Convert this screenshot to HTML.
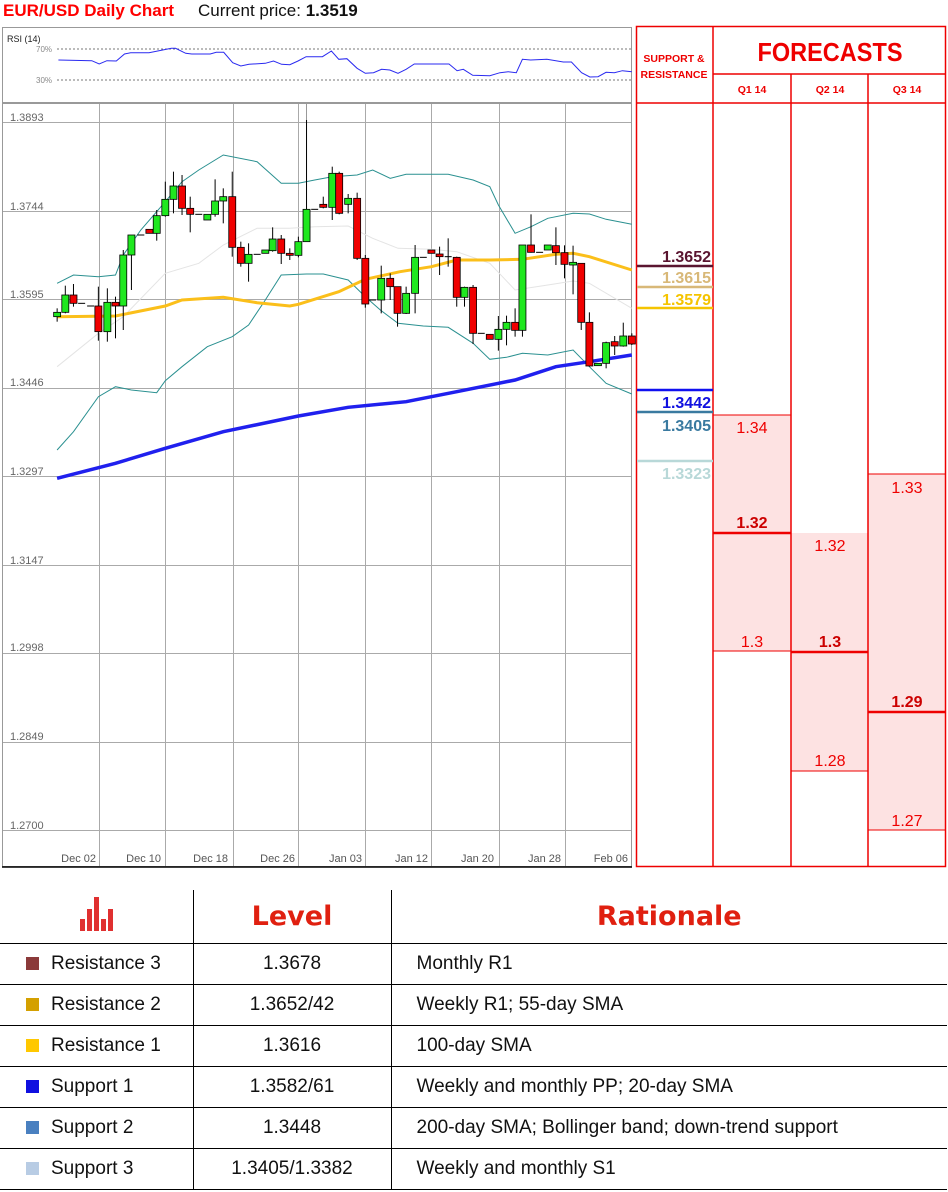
<!DOCTYPE html>
<html><head><meta charset="utf-8">
<style>
*{margin:0;padding:0;box-sizing:border-box}
body{width:948px;height:1192px;background:#fff;font-family:"Liberation Sans",sans-serif;position:relative;overflow:hidden}
.abs{position:absolute}
svg text{font-family:"Liberation Sans",sans-serif}
table{position:absolute;left:0;top:890px;width:947px;border-collapse:collapse}
td{height:41px;font-size:19px;color:#111;border-bottom:1.5px solid #000}
td.c2{text-align:center;border-left:1.5px solid #000;border-right:1.5px solid #000}
td.c1{padding-left:26px}
td.c3{padding-left:25px}
.sq{display:inline-block;width:13px;height:13px;margin-right:12px;vertical-align:-1px}
th{height:53px;border-bottom:1.5px solid #000;color:#e02010;font-size:27px;font-family:"DejaVu Sans","Liberation Sans",sans-serif;font-weight:900}
</style></head><body>
<div class="abs" style="left:3px;top:0;font-size:17px;font-weight:bold;color:#f00;line-height:22px">EUR/USD Daily Chart</div>
<div class="abs" style="left:198px;top:0;font-size:17px;color:#111;line-height:22px">Current price: <b>1.3519</b></div>

<svg class="abs" style="left:0;top:0" width="948" height="880" id="ch">
<rect x="2.5" y="27.5" width="629" height="75" fill="#fff" stroke="#999"/>
<text x="7" y="42" font-size="9" fill="#222">RSI (14)</text>
<text x="36" y="52" font-size="8" fill="#888">70%</text>
<text x="36" y="83" font-size="8" fill="#888">30%</text>
<line x1="57" y1="49" x2="631" y2="49" stroke="#777" stroke-dasharray="2,2"/>
<line x1="57" y1="80" x2="631" y2="80" stroke="#777" stroke-dasharray="2,2"/>
<rect x="2.5" y="103.5" width="629" height="763" fill="#fff" stroke="#999"/>
<g id="grid" stroke="#999" stroke-width="1"></g>
<g font-size="11" fill="#666">
<text x="10" y="121">1.3893</text><text x="10" y="210">1.3744</text><text x="10" y="298">1.3595</text>
<text x="10" y="386">1.3446</text><text x="10" y="475">1.3297</text><text x="10" y="564">1.3147</text>
<text x="10" y="651">1.2998</text><text x="10" y="740">1.2849</text><text x="10" y="829">1.2700</text>
</g>
<g font-size="11" fill="#555" text-anchor="end">
<text x="96" y="862">Dec 02</text><text x="161" y="862">Dec 10</text><text x="228" y="862">Dec 18</text>
<text x="295" y="862">Dec 26</text><text x="362" y="862">Jan 03</text><text x="428" y="862">Jan 12</text>
<text x="494" y="862">Jan 20</text><text x="561" y="862">Jan 28</text><text x="628" y="862">Feb 06</text>
</g>
<line x1="2" y1="867" x2="632" y2="867" stroke="#000" stroke-width="1.5"/>
<g id="lines" fill="none"></g>
<g id="candles"></g>
</svg>

<!-- right panel -->
<svg class="abs" style="left:630px;top:20px" width="318" height="860">
<rect x="83" y="395" width="78" height="236" fill="#fde2e2"/>
<rect x="161" y="513" width="77" height="238" fill="#fde2e2"/>
<rect x="238" y="454" width="78" height="356" fill="#fde2e2"/>
<g stroke="#e00" stroke-width="1.5" fill="none">
<rect x="6.5" y="6.5" width="309" height="840"/>
<line x1="83" y1="6" x2="83" y2="847"/>
<line x1="83" y1="54" x2="316" y2="54"/>
<line x1="6" y1="83" x2="316" y2="83"/>
<line x1="161" y1="54" x2="161" y2="847"/>
<line x1="238" y1="54" x2="238" y2="847"/>
<line x1="83" y1="395" x2="161" y2="395" stroke-width="1"/>
<line x1="83" y1="631" x2="161" y2="631" stroke-width="1"/>
<line x1="161" y1="751" x2="238" y2="751" stroke-width="1"/>
<line x1="238" y1="454" x2="316" y2="454" stroke-width="1"/>
<line x1="238" y1="810" x2="316" y2="810" stroke-width="1"/>
<line x1="83" y1="513" x2="161" y2="513" stroke-width="2.5"/>
<line x1="161" y1="632" x2="238" y2="632" stroke-width="2.5"/>
<line x1="238" y1="692" x2="316" y2="692" stroke-width="2.5"/>
</g>
<g font-weight="bold" fill="#e00" font-size="10.5" text-anchor="middle" font-family="Liberation Sans,sans-serif">
<text x="44" y="42">SUPPORT &amp;</text><text x="44" y="58">RESISTANCE</text>
<text x="122" y="73">Q1 14</text><text x="200" y="73">Q2 14</text><text x="277" y="73">Q3 14</text>
</g>
<text x="200" y="41" font-size="26" font-weight="bold" fill="#e00" text-anchor="middle" textLength="145" lengthAdjust="spacingAndGlyphs">FORECASTS</text>
<g font-size="16" text-anchor="middle" fill="#e00">
<text x="122" y="413">1.34</text><text x="122" y="508" font-weight="bold" fill="#c00">1.32</text><text x="122" y="627">1.3</text>
<text x="200" y="531">1.32</text><text x="200" y="627" font-weight="bold" fill="#c00">1.3</text><text x="200" y="746">1.28</text>
<text x="277" y="473">1.33</text><text x="277" y="687" font-weight="bold" fill="#c00">1.29</text><text x="277" y="806">1.27</text>
</g>
<g stroke-width="2.5">
<line x1="7" y1="246" x2="83" y2="246" stroke="#5a1530"/>
<line x1="7" y1="267" x2="83" y2="267" stroke="#d8b878"/>
<line x1="7" y1="288" x2="83" y2="288" stroke="#f5c400"/>
<line x1="7" y1="370" x2="83" y2="370" stroke="#1010f0"/>
<line x1="7" y1="392" x2="83" y2="392" stroke="#3a7aa0"/>
<line x1="7" y1="441" x2="83" y2="441" stroke="#b8d8d8"/>
</g>
<g font-size="16" font-weight="bold" text-anchor="end">
<text x="81" y="242" fill="#5a1530">1.3652</text>
<text x="81" y="263" fill="#d8b878">1.3615</text>
<text x="81" y="285" fill="#f5c400">1.3579</text>
<text x="81" y="388" fill="#1010e0">1.3442</text>
<text x="81" y="411" fill="#3a7aa0">1.3405</text>
<text x="81" y="459" fill="#b8d8d8">1.3323</text>
</g>
</svg>

<table>
<tr><th style="width:193px"><svg width="36" height="36" viewBox="0 0 36 36"><g fill="#e03030"><rect x="2" y="24" width="5" height="12"/><rect x="9" y="14" width="5" height="22"/><rect x="16" y="2" width="5" height="34"/><rect x="23" y="24" width="5" height="12"/><rect x="30" y="14" width="5" height="22"/></g></svg></th>
<th style="width:198px;border-left:1.5px solid #000;border-right:1.5px solid #000">Level</th><th>Rationale</th></tr>
<tr><td class="c1"><span class="sq" style="background:#8b3a3a"></span>Resistance 3</td><td class="c2">1.3678</td><td class="c3">Monthly R1</td></tr>
<tr><td class="c1"><span class="sq" style="background:#d4a000"></span>Resistance 2</td><td class="c2">1.3652/42</td><td class="c3">Weekly R1; 55-day SMA</td></tr>
<tr><td class="c1"><span class="sq" style="background:#ffc800"></span>Resistance 1</td><td class="c2">1.3616</td><td class="c3">100-day SMA</td></tr>
<tr><td class="c1"><span class="sq" style="background:#1010e0"></span>Support 1</td><td class="c2">1.3582/61</td><td class="c3">Weekly and monthly PP; 20-day SMA</td></tr>
<tr><td class="c1"><span class="sq" style="background:#4a80c0"></span>Support 2</td><td class="c2">1.3448</td><td class="c3">200-day SMA; Bollinger band; down-trend support</td></tr>
<tr><td class="c1"><span class="sq" style="background:#b8cce4"></span>Support 3</td><td class="c2">1.3405/1.3382</td><td class="c3">Weekly and monthly S1</td></tr>
</table>

<script>
var NS="http://www.w3.org/2000/svg";
function el(p,t,a){var e=document.createElementNS(NS,t);for(var k in a)e.setAttribute(k,a[k]);p.appendChild(e);return e;}
var g=document.getElementById('grid');
[122,211,299,388,476,565,653,742,830].forEach(function(y){el(g,'line',{x1:3,y1:y+.5,x2:631,y2:y+.5,stroke:'#aaa'});});
[99,165,233,298,365,431,499,565].forEach(function(x){el(g,'line',{x1:x+.5,y1:104,x2:x+.5,y2:866,stroke:'#aaa'});});
el(g,'line',{x1:306.5,y1:104,x2:306.5,y2:210,stroke:'#999'});
function X(v){return v/2.45}function Y(v){return 120+v/3}
function pl(pts,st,w,rsi){var d=pts.map(function(p,i){return (i?'L':'M')+X(p[0]).toFixed(1)+','+(rsi?(p[1]/3):Y(p[1])).toFixed(1)}).join('');el(document.getElementById('lines'),'path',{d:d,stroke:st,'stroke-width':w,fill:'none'});}
pl([[140,740],[241,640],[302,590],[405,460],[487,430],[547,375],[630,325],[710,325],[771,320],[853,318],[913,355],[975,385],[1057,388],[1119,395],[1200,430],[1262,510],[1342,495],[1404,483],[1444,490],[1548,565]],'#e4e4e4',1);
pl([[140,490],[180,465],[241,470],[283,465],[302,405],[345,330],[405,245],[446,185],[487,150],[547,105],[630,125],[689,190],[731,190],[771,180],[814,170],[875,165],[913,150],[956,175],[995,163],[1098,163],[1159,180],[1200,200],[1221,255],[1262,340],[1301,320],[1342,295],[1404,280],[1444,282],[1485,298],[1548,313]],'#2a9090',1);
pl([[140,990],[180,935],[241,830],[283,800],[322,810],[384,818],[405,782],[446,740],[508,680],[569,650],[609,615],[650,540],[689,465],[751,462],[792,462],[853,480],[895,530],[934,572],[975,610],[1037,618],[1098,622],[1159,670],[1200,718],[1241,712],[1280,700],[1342,705],[1404,690],[1444,740],[1485,790],[1548,822]],'#2a9090',1);
pl([[140,590],[283,588],[405,558],[446,540],[547,532],[630,548],[710,558],[731,553],[830,515],[895,478],[980,455],[1057,440],[1119,420],[1200,420],[1280,418],[1362,403],[1404,400],[1444,410],[1548,450]],'#fbbf1a',3);
pl([[140,1075],[283,1030],[405,985],[547,935],[731,888],[853,862],[995,845],[1119,815],[1262,780],[1362,740],[1444,725],[1548,705]],'#2020ee',3.5);
pl([[143,180],[225,182],[243,192],[262,182],[285,183],[305,162],[320,158],[365,158],[420,145],[430,145],[455,160],[470,162],[515,162],[530,157],[548,157],[570,188],[590,198],[610,193],[650,190],[670,183],[690,193],[710,194],[730,183],[750,170],[790,170],[812,153],[830,178],[850,176],[875,205],[895,220],[915,218],[935,208],[955,210],[975,220],[995,208],[1015,192],[1100,192],[1120,212],[1135,208],[1158,226],[1200,227],[1225,218],[1245,215],[1265,218],[1280,178],[1300,180],[1340,178],[1380,186],[1400,186],[1425,218],[1445,231],[1465,230],[1485,217],[1505,218],[1525,212],[1548,215]],'#2a2af0',1,true);
var C=[[140,'g',577,590,565,605],[160,'g',525,577,497,580],[180,'r',525,550,492,560],[200,'d',550,550,550,550],[222,'d',558,558,558,558],[241,'r',558,635,500,662],[263,'g',547,635,505,665],[283,'r',547,558,530,655],[302,'g',405,558,390,630],[322,'g',345,405,345,510],[345,'d',345,345,345,345],[366,'r',328,340,328,340],[384,'g',287,340,270,362],[405,'g',238,287,185,290],[425,'g',198,238,155,280],[446,'r',198,265,165,285],[466,'r',265,283,230,337],[487,'d',283,283,283,283],[508,'g',283,300,283,300],[527,'g',243,283,178,290],[547,'g',230,243,205,310],[569,'r',230,382,155,410],[590,'r',382,430,365,440],[609,'g',403,430,370,485],[630,'d',403,403,403,403],[650,'g',390,400,390,400],[668,'g',357,392,322,395],[689,'r',357,400,345,432],[710,'r',400,406,385,420],[731,'g',365,406,350,412],[751,'g',268,365,0,365],[771,'d',268,268,268,268],[792,'r',253,262,230,265],[814,'g',160,262,140,300],[831,'r',160,280,155,283],[853,'g',235,253,222,280],[875,'r',235,415,218,420],[895,'r',415,552,405,563],[913,'d',540,540,540,540],[934,'g',475,540,437,580],[956,'r',475,500,460,540],[974,'r',500,580,500,620],[995,'g',520,580,500,582],[1017,'g',412,520,375,580],[1037,'d',412,412,412,412],[1057,'r',390,400,390,400],[1077,'r',402,410,380,465],[1098,'d',410,410,355,440],[1119,'r',412,532,410,560],[1138,'g',502,532,500,560],[1159,'r',502,640,495,672],[1179,'d',640,640,640,640],[1200,'r',643,658,643,658],[1221,'g',628,658,588,692],[1241,'g',607,628,587,676],[1262,'r',607,631,565,650],[1280,'g',375,631,375,650],[1301,'r',375,397,283,398],[1322,'d',397,397,397,397],[1342,'g',375,390,375,390],[1362,'r',377,398,322,435],[1383,'r',398,433,376,475],[1404,'g',427,435,377,523],[1424,'r',430,607,429,630],[1444,'r',607,738,577,740],[1465,'g',730,737,730,737],[1485,'g',668,730,665,745],[1506,'r',665,678,648,705],[1527,'g',648,678,608,680],[1548,'r',648,672,640,675]];
var cg=document.getElementById('candles');
C.forEach(function(c){var x=X(c[0]);
 if(c[4]!=c[5])el(cg,'line',{x1:x,y1:Y(c[4]),x2:x,y2:Y(c[5]),stroke:'#000','stroke-width':1});
 if(c[1]=='d'){el(cg,'line',{x1:x-3.5,y1:Y(c[2]),x2:x+3.5,y2:Y(c[2]),stroke:'#000','stroke-width':1});return;}
 var h=Math.max(Y(c[3])-Y(c[2]),2);
 el(cg,'rect',{x:x-3.5,y:Y(c[2]),width:7,height:h,fill:c[1]=='g'?'#1fe81f':'#f00000',stroke:'#000','stroke-width':.8});
});
</script>
</body></html>
